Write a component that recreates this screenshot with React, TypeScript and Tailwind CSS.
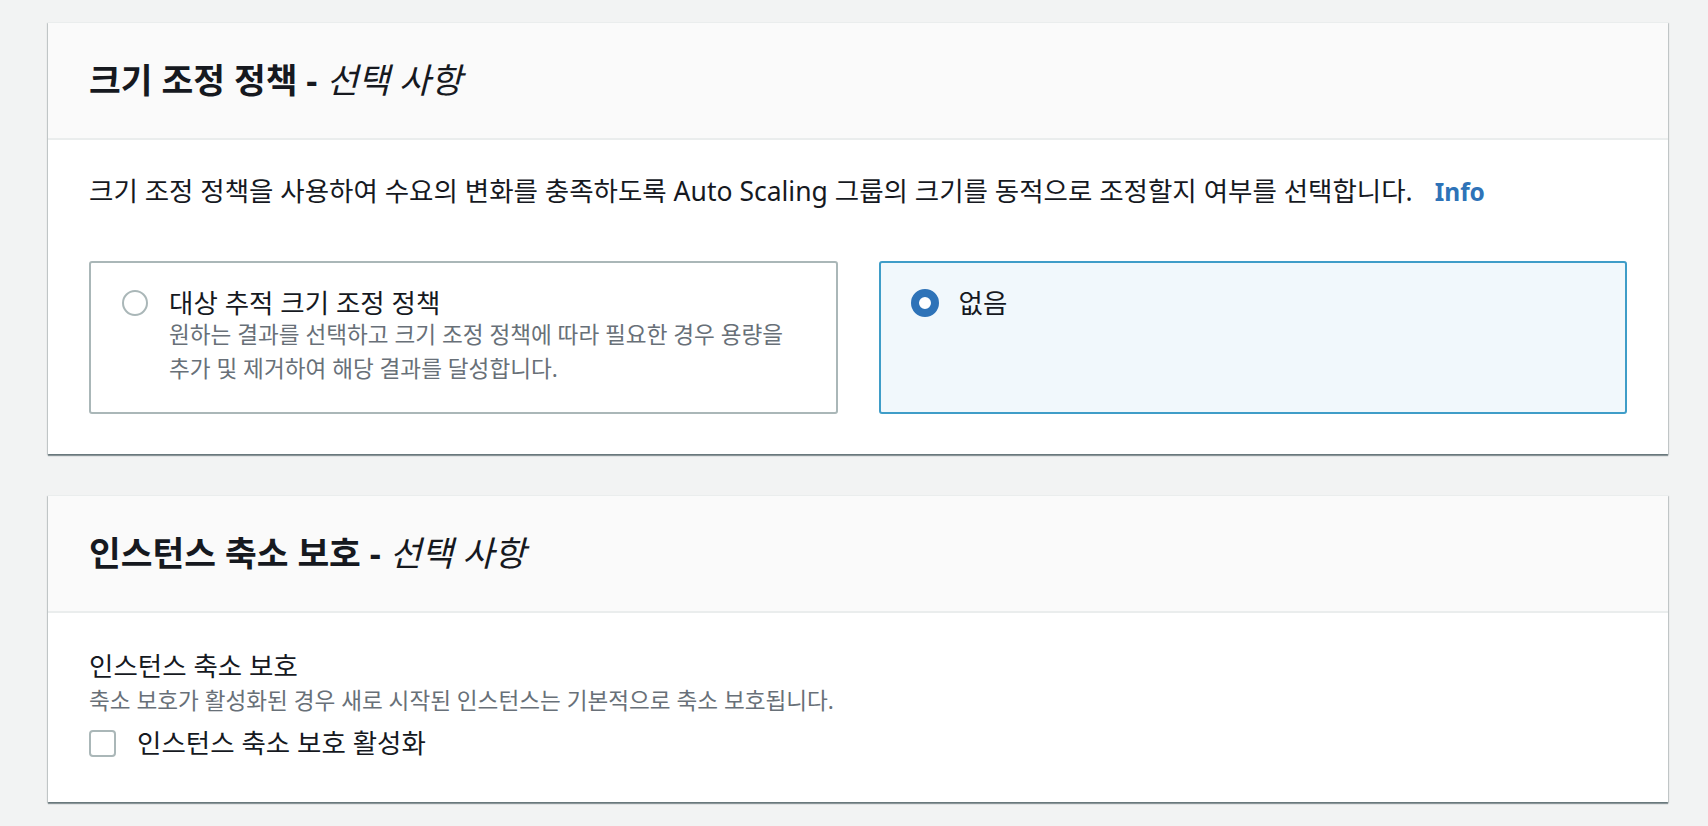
const font = '[font-family:"Noto_Sans","Noto_Sans_CJK_KR",sans-serif]';

function Card({ title, children }: { title: string; children: React.ReactNode }) {
  return (
    <div className="bg-white border-t border-[#eaeded] shadow-[0_2px_1px_0_rgba(0,28,36,0.4),1px_1px_1px_0_rgba(0,28,36,0.15),-1px_1px_1px_0_rgba(0,28,36,0.15)]">
      <div className="h-[117px] flex items-center px-[41px] bg-[#fafafa] border-b-2 border-[#eaeded]">
        <h2 className="text-[34.5px] font-bold text-[#16191f] leading-none">
          {title} - <span className="font-normal italic">선택 사항</span>
        </h2>
      </div>
      {children}
    </div>
  );
}

export default function App() {
  return (
    <div className={`min-h-screen bg-[#f2f3f3] pt-[22px] pl-[48px] pr-[40px] ${font} text-[#16191f]`}>
      <Card title="크기 조정 정책">
        <div className="px-[41px] pt-[34px] pb-[40px]">
          <p className="text-[26.5px] leading-[35px]">
            크기 조정 정책을 사용하여 수요의 변화를 충족하도록 Auto Scaling 그룹의 크기를 동적으로 조정할지 여부를 선택합니다.
            <a className="ml-[22px] text-[24.5px] font-bold text-[#2e73b8]">Info</a>
          </p>
          <div className="mt-[52px] grid grid-cols-2 gap-[41px]">
            <label className="h-[153px] flex items-start gap-[21px] rounded-[3px] border-2 border-[#aab7b8] pl-[31px] pt-[25px]">
              <span className="mt-[2px] w-[26px] h-[26px] shrink-0 rounded-full border-2 border-[#aab7b8] bg-white" />
              <span className="flex flex-col">
                <span className="text-[26.5px] leading-[30px]">대상 추적 크기 조정 정책</span>
                <span className="text-[22.6px] leading-[34px] text-[#687078]">
                  원하는 결과를 선택하고 크기 조정 정책에 따라 필요한 경우 용량을
                  <br />
                  추가 및 제거하여 해당 결과를 달성합니다.
                </span>
              </span>
            </label>
            <label className="h-[153px] flex items-start gap-[20px] rounded-[3px] border-2 border-[#3f9dc8] bg-[#f1f8fc] pl-[30px] pt-[25px]">
              <span className="mt-[1px] w-[28px] h-[28px] shrink-0 rounded-full border-[8px] border-[#2e73b8] bg-white" />
              <span className="text-[26.5px] leading-[30px]">없음</span>
            </label>
          </div>
        </div>
      </Card>

      <div className="mt-[41px]">
        <Card title="인스턴스 축소 보호">
          <div className="px-[41px] pt-[37px] pb-[41px]">
            <div className="text-[26.5px] leading-[32px]">인스턴스 축소 보호</div>
            <div className="text-[22.6px] leading-[32px] text-[#687078] mt-[3px]">
              축소 보호가 활성화된 경우 새로 시작된 인스턴스는 기본적으로 축소 보호됩니다.
            </div>
            <label className="mt-[9px] flex items-center gap-[21px] h-[35px]">
              <span className="w-[27px] h-[27px] shrink-0 rounded-[4px] border-2 border-[#aab7b8] bg-white" />
              <span className="text-[26.5px]">인스턴스 축소 보호 활성화</span>
            </label>
          </div>
        </Card>
      </div>
    </div>
  );
}
